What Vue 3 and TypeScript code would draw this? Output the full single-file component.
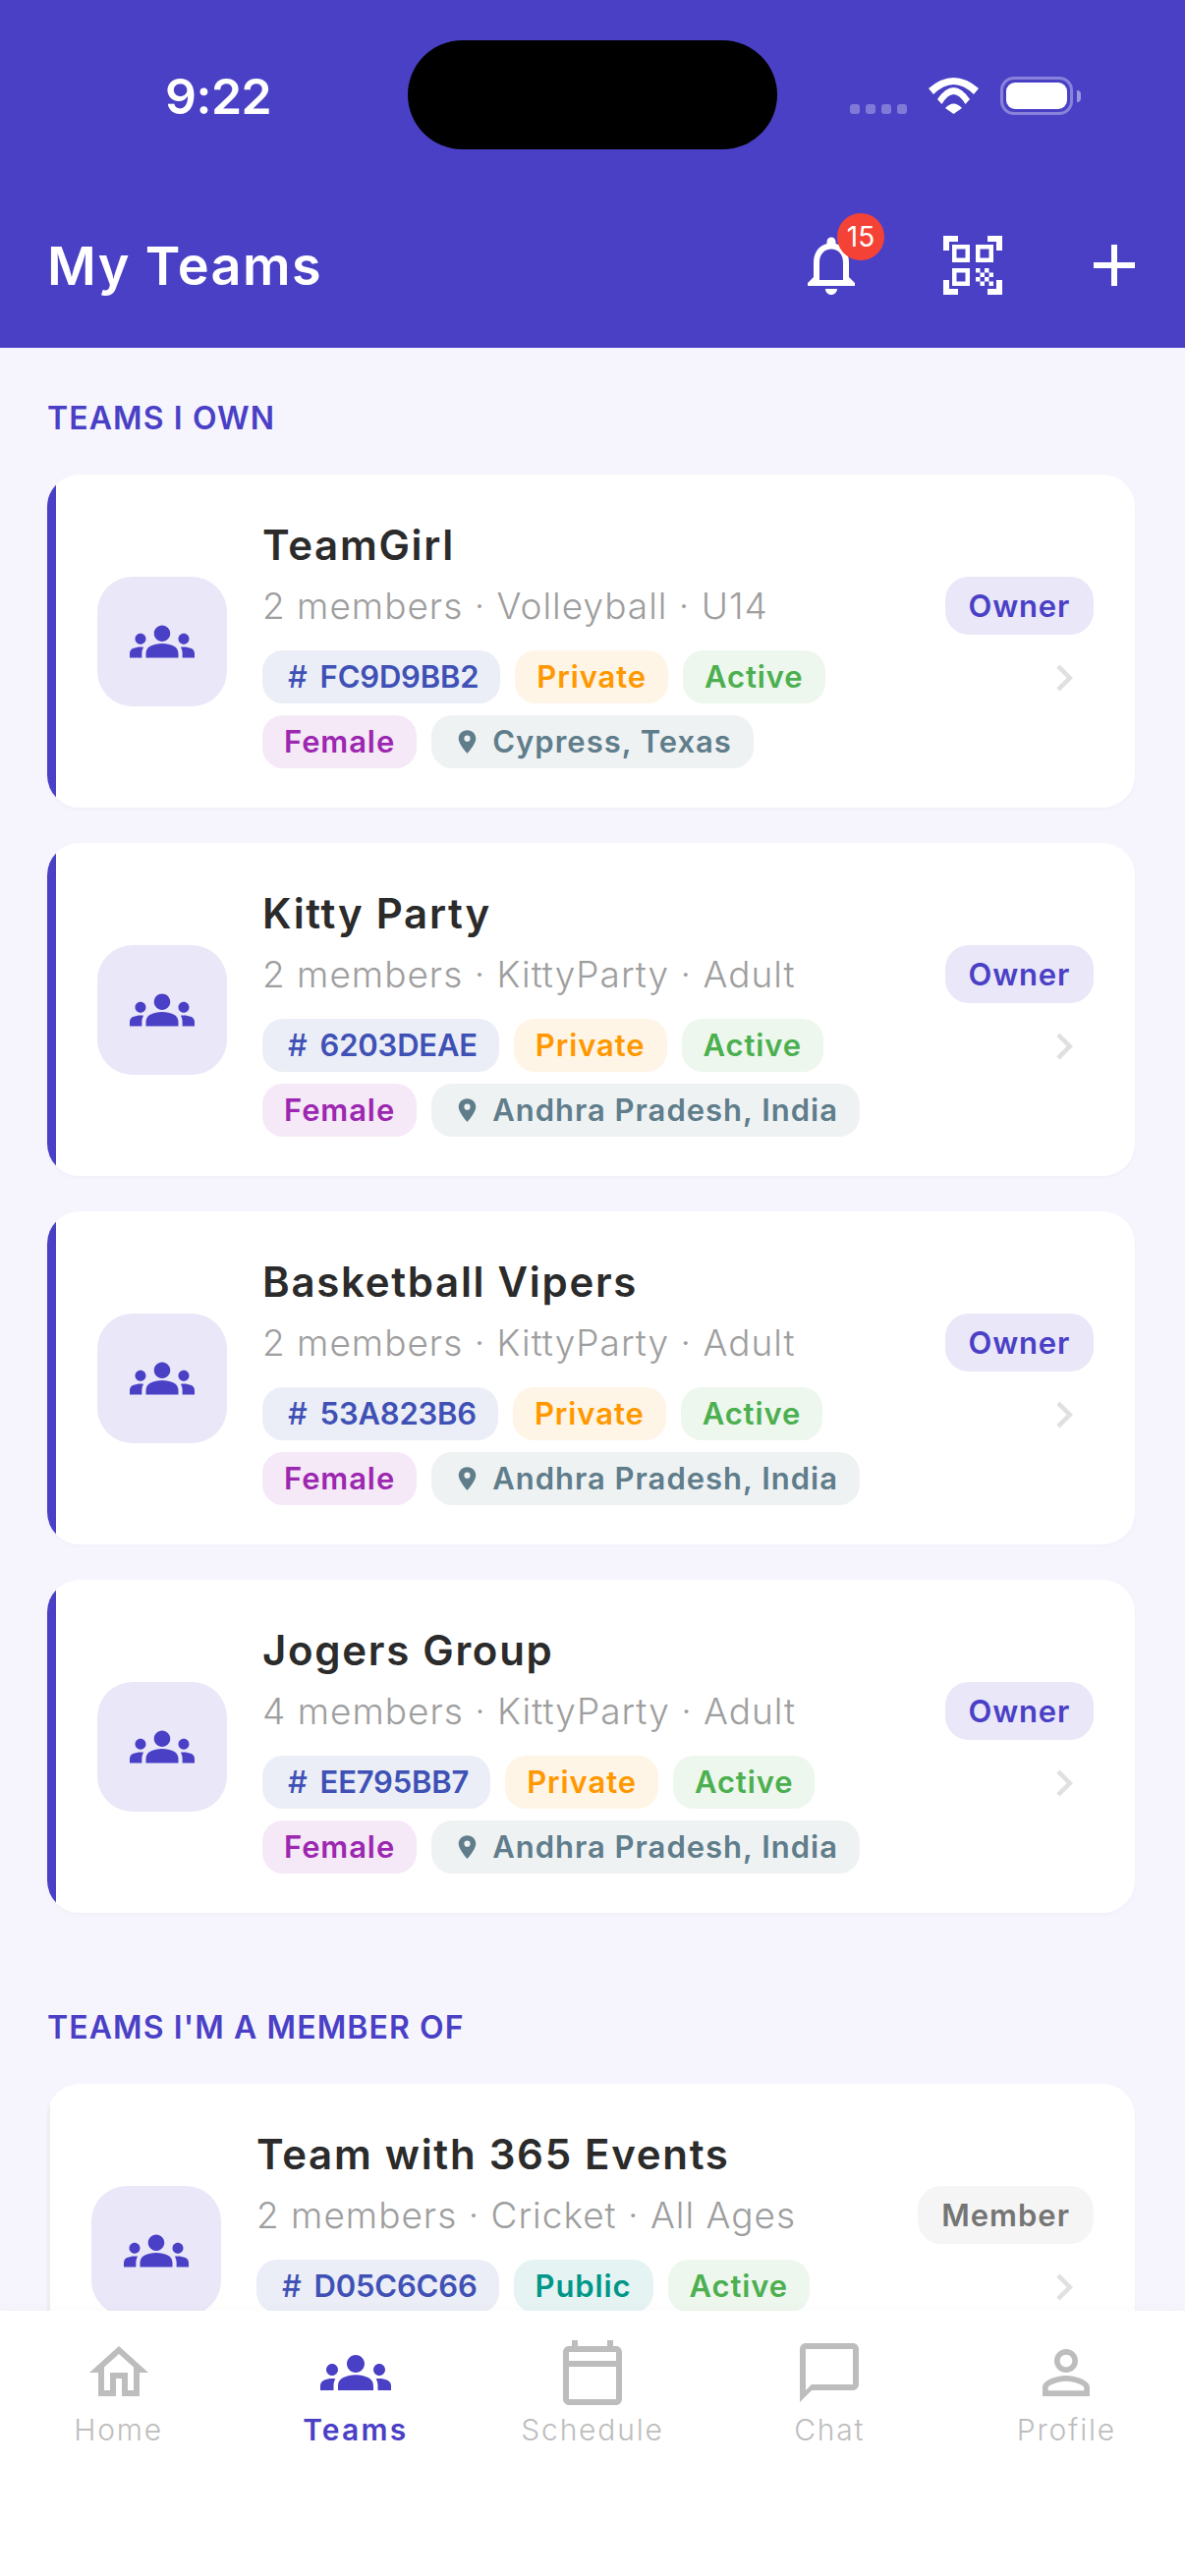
<script setup lang="ts">
interface Chip {
  label: string
  kind: 'code' | 'private' | 'public' | 'active' | 'gender' | 'place'
}

interface Team {
  name: string
  meta: string
  chips: Chip[]
}

const GROUPS_PATH = 'M12 12.75c1.63 0 3.07.39 4.24.9 1.08.48 1.76 1.56 1.76 2.73V18H6v-1.61c0-1.18.68-2.26 1.76-2.73 1.17-.52 2.61-.91 4.24-.91zM4 13c1.1 0 2-.9 2-2s-.9-2-2-2-2 .9-2 2 .9 2 2 2zm1.13 1.1c-.37-.06-.74-.1-1.13-.1-.99 0-1.93.21-2.78.58C.48 14.9 0 15.62 0 16.43V18h4.5v-1.61c0-.83.23-1.61.63-2.29zM20 13c1.1 0 2-.9 2-2s-.9-2-2-2-2 .9-2 2 .9 2 2 2zm4 3.43c0-.81-.48-1.53-1.22-1.85-.85-.37-1.79-.58-2.78-.58-.39 0-.76.04-1.13.1.4.68.63 1.46.63 2.29V18H24v-1.57zM12 6c1.66 0 3 1.34 3 3s-1.34 3-3 3-3-1.34-3-3 1.34-3 3-3z'

const ownedChips = (code: string, place: string): Chip[] => [
  { label: code, kind: 'code' },
  { label: 'Private', kind: 'private' },
  { label: 'Active', kind: 'active' },
  { label: 'Female', kind: 'gender' },
  { label: place, kind: 'place' },
]

const ownedTeams: Team[] = [
  { name: 'TeamGirl', meta: '2 members · Volleyball · U14', chips: ownedChips('FC9D9BB2', 'Cypress, Texas') },
  { name: 'Kitty Party', meta: '2 members · KittyParty · Adult', chips: ownedChips('6203DEAE', 'Andhra Pradesh, India') },
  { name: 'Basketball Vipers', meta: '2 members · KittyParty · Adult', chips: ownedChips('53A823B6', 'Andhra Pradesh, India') },
  { name: 'Jogers Group', meta: '4 members · KittyParty · Adult', chips: ownedChips('EE795BB7', 'Andhra Pradesh, India') },
]

const memberTeams: Team[] = [
  {
    name: 'Team with 365 Events',
    meta: '2 members · Cricket · All Ages',
    chips: [
      { label: 'D05C6C66', kind: 'code' },
      { label: 'Public', kind: 'public' },
      { label: 'Active', kind: 'active' },
    ],
  },
]

const sections = [
  { title: 'TEAMS I OWN', role: 'Owner', teams: ownedTeams },
  { title: "TEAMS I'M A MEMBER OF", role: 'Member', teams: memberTeams },
]

const navItems = [
  { label: 'Home', path: 'M12 5.69l5 4.5V18h-2v-6H9v6H7v-7.81l5-4.5M12 3L2 12h3v8h6v-6h2v6h6v-8h3L12 3z' },
  { label: 'Teams', path: GROUPS_PATH, active: true },
  { label: 'Schedule', path: 'M20 3h-1V1h-2v2H7V1H5v2H4c-1.1 0-2 .9-2 2v16c0 1.1.9 2 2 2h16c1.1 0 2-.9 2-2V5c0-1.1-.9-2-2-2zm0 2v3H4V5h16zM4 21V10h16v11H4z' },
  { label: 'Chat', path: 'M20 2H4c-1.1 0-2 .9-2 2v18l4-4h14c1.1 0 2-.9 2-2V4c0-1.1-.9-2-2-2zm0 14H6l-2 2V4h16v12z' },
  { label: 'Profile', path: 'M12 5.9c1.16 0 2.1.94 2.1 2.1s-.94 2.1-2.1 2.1S9.9 9.16 9.9 8s.94-2.1 2.1-2.1m0 9c2.97 0 6.1 1.46 6.1 2.1v1.1H5.9V17c0-.64 3.13-2.1 6.1-2.1M12 4C9.79 4 8 5.79 8 8s1.79 4 4 4 4-1.79 4-4-1.79-4-4-4zm0 9c-2.67 0-8 1.34-8 4v3h16v-3c0-2.66-5.33-4-8-4z' },
]
</script>

<template>
  <div class="screen">
    <header class="header">
      <div class="status">
        <span class="status__time">9:22</span>
        <div class="status__island" />
        <div class="status__right">
          <div class="signal">
            <i v-for="n in 4" :key="n" />
          </div>
          <svg class="wifi" width="51" height="37" viewBox="0 0 51 37">
            <path fill="#fff" d="M0 11Q25.5-11 51 11L46 17Q25.5-3 5 17Z" />
            <path fill="#fff" d="M9 22Q25.5-2 42 22L37.5 27Q25.5 7 13.5 27Z" />
            <path fill="#fff" d="M17 31Q25.5 22 34 31L25.5 37Z" />
          </svg>
          <div class="battery">
            <div class="battery__level" />
          </div>
          <div class="battery__nub" />
        </div>
      </div>
      <div class="toolbar">
        <h1 class="toolbar__title">My Teams</h1>
        <div class="toolbar__actions">
          <div class="bell">
            <svg class="icon-72" viewBox="0 0 24 24">
              <path fill="#fff" d="M12 22c1.1 0 2-.9 2-2h-4c0 1.1.9 2 2 2zm6-6v-5c0-3.07-1.63-5.64-4.5-6.32V4c0-.83-.67-1.5-1.5-1.5s-1.5.67-1.5 1.5v.68C7.64 5.36 6 7.92 6 11v5l-2 2v1h16v-1l-2-2zm-2 1H8v-6c0-2.48 1.51-4.5 4-4.5s4 2.02 4 4.5v6z" />
            </svg>
            <span class="bell__badge">15</span>
          </div>
          <svg class="icon-72" viewBox="0 0 24 24">
            <path fill="#fff" d="M9.5 6.5v3h-3v-3h3M11 5H5v6h6V5zm-1.5 9.5v3h-3v-3h3M11 13H5v6h6v-6zm6.5-6.5v3h-3v-3h3M19 5h-6v6h6V5zm-6 8h1.5v1.5H13V13zm1.5 1.5H16V16h-1.5v-1.5zM16 13h1.5v1.5H16V13zm-3 3h1.5v1.5H13V16zm1.5 1.5H16V19h-1.5v-1.5zM16 16h1.5v1.5H16V16zm1.5-1.5H19V16h-1.5v-1.5zm0 3H19V19h-1.5v-1.5zM22 7h-2V4h-3V2h5v5zm0 15v-5h-2v3h-3v2h5zM2 22h5v-2H4v-3H2v5zM2 2v5h2V4h3V2H2z" />
          </svg>
          <svg class="icon-72" viewBox="0 0 24 24">
            <path fill="#fff" d="M19 13h-6v6h-2v-6H5v-2h6V5h2v6h6v2z" />
          </svg>
        </div>
      </div>
    </header>

    <main class="content">
      <section v-for="section in sections" :key="section.title" class="section">
        <h2 class="section__title">{{ section.title }}</h2>
        <article
          v-for="team in section.teams"
          :key="team.name"
          class="card"
          :class="section.role === 'Owner' ? 'card--owner' : 'card--member'"
        >
          <div class="card__avatar">
            <svg width="66" height="66" viewBox="0 0 24 24">
              <path fill="#4a40c6" :d="GROUPS_PATH" />
            </svg>
          </div>
          <div class="card__body">
            <div class="card__name">{{ team.name }}</div>
            <div class="card__meta">{{ team.meta }}</div>
            <div class="chips">
              <span
                v-for="chip in team.chips"
                :key="chip.label"
                class="chip"
                :class="`chip--${chip.kind}`"
              >
                <span v-if="chip.kind === 'code'" class="chip__hash">#</span>
                <svg v-if="chip.kind === 'place'" class="chip__pin" width="19" height="24" viewBox="0 0 16 20">
                  <path fill="#607d8b" fill-rule="evenodd" d="M8 0C3.6 0 .6 3.2.6 7.2.6 12 8 20 8 20s7.4-8 7.4-12.8C15.4 3.2 12.4 0 8 0zm0 9.8a2.6 2.6 0 1 1 0-5.2 2.6 2.6 0 0 1 0 5.2z" />
                </svg>
                {{ chip.label }}
              </span>
            </div>
          </div>
          <div class="card__side">
            <span class="role">{{ section.role }}</span>
            <svg class="card__chevron" width="54" height="54" viewBox="0 0 24 24">
              <path fill="#e0e0e0" d="M10 6L8.59 7.41 13.17 12l-4.58 4.59L10 18l6-6z" />
            </svg>
          </div>
        </article>
      </section>
    </main>

    <nav class="nav">
      <div
        v-for="item in navItems"
        :key="item.label"
        class="nav__item"
        :class="{ 'nav__item--active': item.active }"
      >
        <svg class="icon-72" viewBox="0 0 24 24">
          <path fill="currentColor" :d="item.path" />
        </svg>
        <span class="nav__label">{{ item.label }}</span>
      </div>
    </nav>
  </div>
</template>

<style>
html,
body {
  margin: 0;
  background: #f6f5fd;
}
</style>

<style scoped>
.screen {
  width: 1206px;
  height: 2622px;
  display: flex;
  flex-direction: column;
  overflow: hidden;
  background: #f6f5fd;
  font-family: Inter, "Noto Sans", sans-serif;
}

.header {
  flex: none;
  height: 354px;
  background: #4a40c6;
  color: #fff;
}

.status {
  position: relative;
  height: 234px;
  box-sizing: border-box;
  padding: 72px 106px 0 168px;
  display: flex;
  align-items: flex-start;
  justify-content: space-between;
}

.status__time {
  font-size: 50px;
  line-height: 52px;
  font-weight: 600;
  letter-spacing: -0.5px;
}

.status__island {
  position: absolute;
  left: 415px;
  top: 41px;
  width: 376px;
  height: 111px;
  border-radius: 56px;
  background: #000;
}

.status__right {
  display: flex;
  align-items: flex-end;
  height: 39px;
  margin-top: 6px;
}

.signal {
  display: flex;
  gap: 6px;
  margin-right: 22px;
  margin-bottom: 1px;
}

.signal i {
  width: 10px;
  height: 10px;
  border-radius: 3px;
  background: rgba(255, 255, 255, 0.3);
}

.wifi {
  margin-right: 22px;
  margin-bottom: 1px;
}

.battery {
  width: 74px;
  height: 39px;
  box-sizing: border-box;
  padding: 3px;
  border: 3px solid rgba(255, 255, 255, 0.35);
  border-radius: 14px;
}

.battery__level {
  height: 100%;
  border-radius: 9px;
  background: #fff;
}

.battery__nub {
  width: 4px;
  height: 12px;
  margin: 0 0 13px 4px;
  border-radius: 0 6px 6px 0;
  background: rgba(255, 255, 255, 0.45);
}

.toolbar {
  display: flex;
  align-items: center;
  justify-content: space-between;
  height: 72px;
  padding: 0 36px 0 48px;
}

.toolbar__title {
  margin: 0;
  padding-top: 2px;
  font-size: 54px;
  line-height: 72px;
  font-weight: 600;
  letter-spacing: 1.4px;
}

.toolbar__actions {
  display: flex;
  gap: 72px;
}

.icon-72 {
  display: block;
  flex: none;
  width: 72px;
  height: 72px;
}

.bell {
  position: relative;
}

.bell__badge {
  position: absolute;
  left: 42px;
  top: -17px;
  width: 48px;
  height: 48px;
  border-radius: 50%;
  background: #f44336;
  font-size: 28px;
  line-height: 48px;
  text-align: center;
}

.content {
  flex: 1;
  min-height: 0;
  overflow: hidden;
  padding: 48px 51px 0 48px;
}

.section + .section {
  margin-top: 93px;
}

.section__title {
  margin: 0 0 33px;
  font-size: 32px;
  line-height: 48px;
  font-weight: 600;
  letter-spacing: 1.1px;
  color: #4a40c6;
}

.card {
  display: flex;
  align-items: center;
  box-sizing: border-box;
  height: 339px;
  margin-bottom: 36px;
  padding: 0 42px;
  border-radius: 33px;
  box-shadow: 0 2px 5px rgba(0, 0, 0, 0.025);
}

.card--owner {
  padding-left: 51px;
  background: linear-gradient(to right, #4a40c6 9px, #fff 9px);
}

.card--member {
  padding-left: 45px;
  background: linear-gradient(to right, #eeeef2 3px, #fff 3px);
}

.card__avatar {
  flex: none;
  width: 132px;
  height: 132px;
  display: flex;
  align-items: center;
  justify-content: center;
  margin-right: 36px;
  border-radius: 36px;
  background: #e9e7f8;
}

.card__body {
  flex: 1;
  min-width: 0;
  height: 255px;
}

.card__name {
  font-size: 42px;
  line-height: 60px;
  font-weight: 600;
  letter-spacing: 1.7px;
  color: #2b2b2b;
}

.card__meta {
  margin-top: 5px;
  font-size: 37px;
  line-height: 54px;
  font-weight: 300;
  letter-spacing: 1px;
  color: #9e9e9e;
}

.chips {
  display: flex;
  flex-wrap: wrap;
  gap: 12px 15px;
  margin-top: 18px;
}

.chip {
  display: inline-flex;
  align-items: center;
  height: 54px;
  box-sizing: border-box;
  padding: 0 22px;
  border-radius: 21px;
  font-size: 31px;
  line-height: 54px;
  font-weight: 600;
  letter-spacing: 0.9px;
  white-space: nowrap;
}

.chip--code {
  color: #3f51b5;
  background: #ebeef7;
  letter-spacing: -0.2px;
}

.chip__hash {
  margin: 0 13px 0 4px;
  font-weight: 500;
}

.chip--private {
  color: #ff9800;
  background: #fff5e6;
}

.chip--public {
  color: #009688;
  background: #e5f4f3;
}

.chip--active {
  color: #4caf50;
  background: #edf7ed;
}

.chip--gender {
  color: #9c27b0;
  background: #f5e9f7;
}

.chip--place {
  color: #607d8b;
  background: #eff2f3;
  letter-spacing: 1px;
}

.chip__pin {
  margin: 0 16px 0 5px;
}

.card__side {
  flex: none;
  display: flex;
  flex-direction: column;
  align-items: flex-end;
  gap: 17px;
}

.role {
  height: 59px;
  padding: 0 24px;
  border-radius: 24px;
  background: #e9e7f8;
  color: #4a40c6;
  font-size: 31px;
  line-height: 59px;
  font-weight: 600;
  letter-spacing: 0.8px;
}

.card--member .role {
  background: #f5f5f5;
  color: #757575;
  letter-spacing: 1px;
}

.card__chevron {
  display: block;
  margin: 0 3px 1px 0;
}

.nav {
  flex: none;
  height: 270px;
  display: grid;
  grid-template-columns: repeat(5, 1fr);
  background: #fff;
  box-shadow: 0 -3px 12px rgba(0, 0, 0, 0.02);
  position: relative;
}

.nav__item {
  display: flex;
  flex-direction: column;
  align-items: center;
  padding-top: 27px;
  color: #bdbdbd;
}

.nav__item--active {
  color: #4a40c6;
}

.nav__label {
  margin-top: 1px;
  font-size: 30px;
  line-height: 42px;
  font-weight: 300;
  letter-spacing: 1.8px;
}

.nav__item--active .nav__label {
  font-weight: 600;
  letter-spacing: 2.2px;
}
</style>
